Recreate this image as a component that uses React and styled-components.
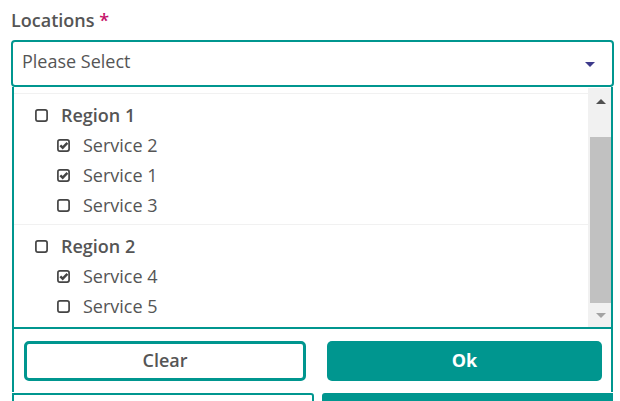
import React from 'react'
import styled, { createGlobalStyle } from 'styled-components'

const TEAL = '#00968f'

const GlobalStyle = createGlobalStyle`
  body {
    margin: 0;
    background: #fff;
    font-family: "Open Sans", "Noto Sans", sans-serif;
    color: #555;
  }
`

const groups = [
  {
    name: 'Region 1',
    items: [
      { name: 'Service 2', checked: true },
      { name: 'Service 1', checked: true },
      { name: 'Service 3', checked: false },
    ],
  },
  {
    name: 'Region 2',
    items: [
      { name: 'Service 4', checked: true },
      { name: 'Service 5', checked: false },
    ],
  },
]

// little square checkbox glyph, with or without the tick
const CheckIcon = ({ checked }) => (
  <svg width="13" height="13" viewBox="0 0 13 13">
    <rect x="0.9" y="0.9" width="11.2" height="11.2" rx="2" fill="none" stroke="currentColor" strokeWidth="1.7" />
    {checked && (
      <path d="M3.3 6.3 L5.7 8.7 L10.4 3.8" fill="none" stroke="currentColor" strokeWidth="2.4" strokeLinejoin="miter" />
    )}
  </svg>
)

const App = () => {
  return (
    <Page>
      <GlobalStyle />
      <Label>
        Locations <Required>*</Required>
      </Label>
      <Select>
        <Placeholder>Please Select</Placeholder>
        <Caret />
      </Select>
      <Panel>
        <Body>
          <List>
            {groups.map((group) => (
              <Group key={group.name}>
                <Row $level={0}>
                  <Box><CheckIcon /></Box>
                  {group.name}
                </Row>
                {group.items.map((item) => (
                  <Row $level={1} key={item.name}>
                    <Box><CheckIcon checked={item.checked} /></Box>
                    {item.name}
                  </Row>
                ))}
              </Group>
            ))}
          </List>
          <Scrollbar>
            <ArrowButton><Arrow $up /></ArrowButton>
            <Track>
              <Thumb />
            </Track>
            <ArrowButton $down><Arrow /></ArrowButton>
          </Scrollbar>
        </Body>
        <Footer>
          <ClearButton>Clear</ClearButton>
          <OkButton>Ok</OkButton>
        </Footer>
      </Panel>
      <Underneath>
        <GhostOutline />
        <GhostFilled />
      </Underneath>
    </Page>
  )
}

export default App

const Page = styled.div`
  padding: 8px 6px 0 11px;
  height: 401px;
  box-sizing: border-box;
  overflow: hidden;
`
const Label = styled.div`
  font-size: 18px;
  line-height: 24px;
  font-weight: 600;
  color: #555;
`
const Required = styled.span`
  color: #c5126a;
`
const Select = styled.div`
  margin-top: 8px;
  width: 603px;
  height: 47px;
  box-sizing: border-box;
  border: 2px solid ${TEAL};
  border-radius: 4px;
  display: flex;
  align-items: center;
  justify-content: space-between;
  padding: 0 17px 5px 9px;
`
const Placeholder = styled.span`
  font-size: 18px;
  color: #555;
`
const Caret = styled.span`
  width: 0;
  height: 0;
  margin-top: 7px;
  border-left: 5px solid transparent;
  border-right: 5px solid transparent;
  border-top: 5px solid #3d3a8b;
`
const Panel = styled.div`
  margin-left: 1px;
  width: 601px;
  box-sizing: border-box;
  border: 2px solid ${TEAL};
  border-top: none;
  border-bottom: none;
  padding-top: 1px;
  background: #fff;
`
const Body = styled.div`
  display: flex;
  height: 239px;
`
const List = styled.div`
  flex: 1;
  padding-top: 5px;
`
const Group = styled.div`
  border-top: 1px solid #f1f1f1;
  padding: 6px 0 4px;
`
const Row = styled.div`
  height: 30px;
  display: flex;
  align-items: center;
  padding-left: ${(p) => 21 + p.$level * 22}px;
  font-size: 18px;
  font-weight: ${(p) => (p.$level === 0 ? 600 : 400)};
  color: #555;
`
const Box = styled.span`
  display: inline-flex;
  align-items: center;
  width: 26px;
  color: #444;
`
const Scrollbar = styled.div`
  width: 23px;
  background: #f1f1f1;
  display: flex;
  flex-direction: column;
`
const ArrowButton = styled.div`
  height: ${(p) => (p.$down ? 24 : 27)}px;
  display: flex;
  align-items: center;
  justify-content: center;
  padding-left: 2px;
`
const Arrow = styled.span`
  width: 0;
  height: 0;
  border-left: 5.5px solid transparent;
  border-right: 5.5px solid transparent;
  ${(p) =>
    p.$up
      ? `border-bottom: 5px solid #505050;`
      : `border-top: 5px solid #a3a3a3;`}
`
const Track = styled.div`
  flex: 1;
  padding: 22px 0 0 2px;
`
const Thumb = styled.div`
  height: 166px;
  background: #c1c1c1;
`
const Footer = styled.div`
  border-top: 2px solid ${TEAL};
  padding: 12px 9px 11px 10px;
  display: grid;
  grid-template-columns: 282px 275px;
  column-gap: 21px;
`
const BaseButton = styled.button`
  height: 40px;
  box-sizing: border-box;
  border-radius: 5px;
  font-family: "Open Sans", "Noto Sans", sans-serif;
  font-size: 18px;
  font-weight: 600;
  padding: 0 0 2px;
  cursor: pointer;
`
const ClearButton = styled(BaseButton)`
  background: #fff;
  border: 3px solid ${TEAL};
  color: #555;
`
const OkButton = styled(BaseButton)`
  background: ${TEAL};
  border: none;
  color: #fff;
  font-weight: 700;
`
const Underneath = styled.div`
  margin-top: 1px;
  margin-left: 1px;
  display: flex;
  gap: 8px;
`
const GhostOutline = styled.div`
  width: 302px;
  height: 40px;
  box-sizing: border-box;
  border: 2px solid ${TEAL};
  border-top-right-radius: 3px;
`
const GhostFilled = styled.div`
  width: 291px;
  height: 40px;
  background: ${TEAL};
  border-top-left-radius: 3px;
`
